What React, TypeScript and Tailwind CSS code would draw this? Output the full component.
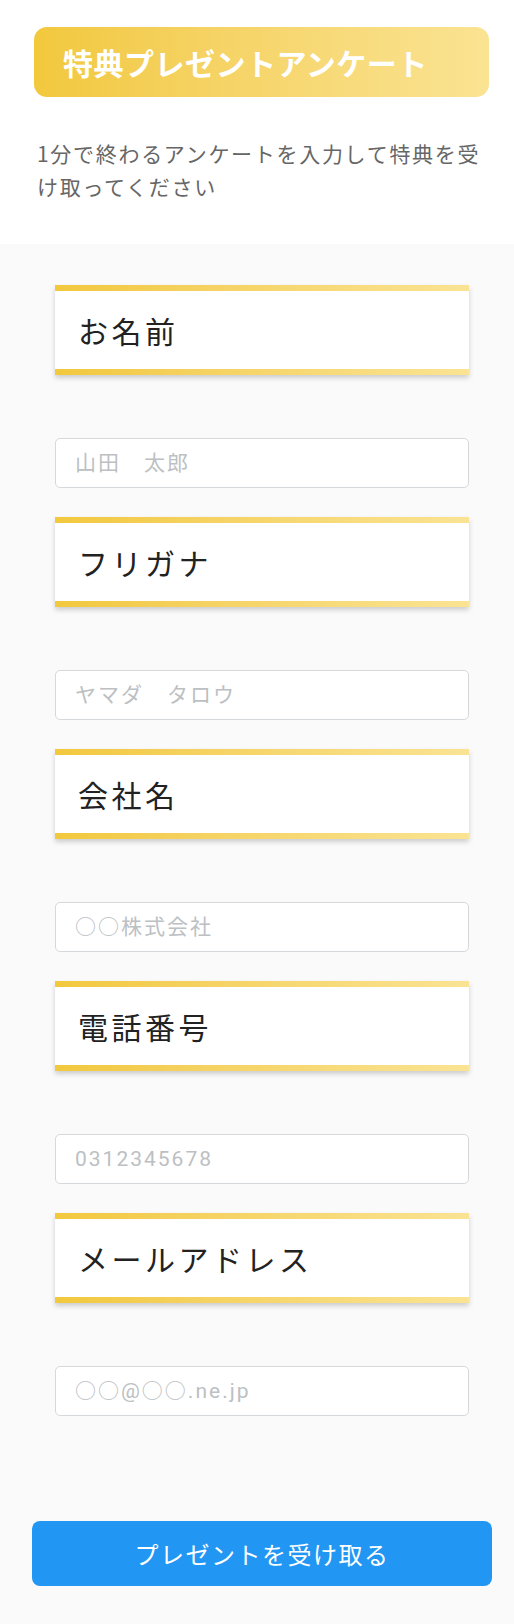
const fields = [
  { label: 'お名前', placeholder: '山田　太郎' },
  { label: 'フリガナ', placeholder: 'ヤマダ　タロウ' },
  { label: '会社名', placeholder: '○○株式会社' },
  { label: '電話番号', placeholder: '0312345678' },
  { label: 'メールアドレス', placeholder: '○○@○○.ne.jp' },
];

const font = { fontFamily: '"Noto Sans CJK JP", "Noto Sans", sans-serif' };

function FieldCard({ label, placeholder }: { label: string; placeholder: string }) {
  return (
    <div>
      <div className="bg-white shadow-[0_3px_5px_rgba(0,0,0,0.18)]">
        <div className="h-[6px] bg-gradient-to-r from-[#f2c83c] to-[#fae392]" />
        <div className="h-[78px] flex items-center pl-[23px] text-[30px] tracking-[3.5px] text-[#222]">
          {label}
        </div>
        <div className="h-[6px] bg-gradient-to-r from-[#f2c83c] to-[#fae392]" />
      </div>
      <input
        type="text"
        placeholder={placeholder}
        className="mt-[63px] mb-[29px] block w-full h-[50px] rounded-[5px] border-[1.5px] border-[#d6d9db] bg-white pl-[19px] text-[21px] tracking-[2px] outline-none placeholder:text-[#bcc0c3] font-['Roboto','Noto_Sans_CJK_JP',sans-serif]"
      />
    </div>
  );
}

export default function App() {
  return (
    <div className="min-h-[1624px] bg-[#fafafa]" style={font}>
      {/* Header */}
      <div className="bg-white pt-[27px] pb-[41px]">
        <div className="ml-[34px] w-[455px] h-[70px] rounded-[13px] bg-gradient-to-r from-[#f2c83c] to-[#fae392] flex items-center pl-[29px]">
          <h1 className="text-white font-bold text-[30px] tracking-[0.5px]">特典プレゼントアンケート</h1>
        </div>
        <p className="ml-[37px] w-[447px] mt-[40px] text-[21px] leading-[33px] tracking-[1.7px] text-[#666]">
          1分で終わるアンケートを入力して特典を受け取ってください
        </p>
      </div>

      {/* Form */}
      <div className="ml-[32px] w-[460px] pt-[41px]">
        <div className="px-[23px]">
          {fields.map((f) => (
            <FieldCard key={f.label} label={f.label} placeholder={f.placeholder} />
          ))}
        </div>
        <button className="mt-[76px] w-full h-[65px] rounded-[8px] bg-[#2196f3] text-white text-[24px] tracking-[1.5px]">
          プレゼントを受け取る
        </button>
      </div>
    </div>
  );
}
